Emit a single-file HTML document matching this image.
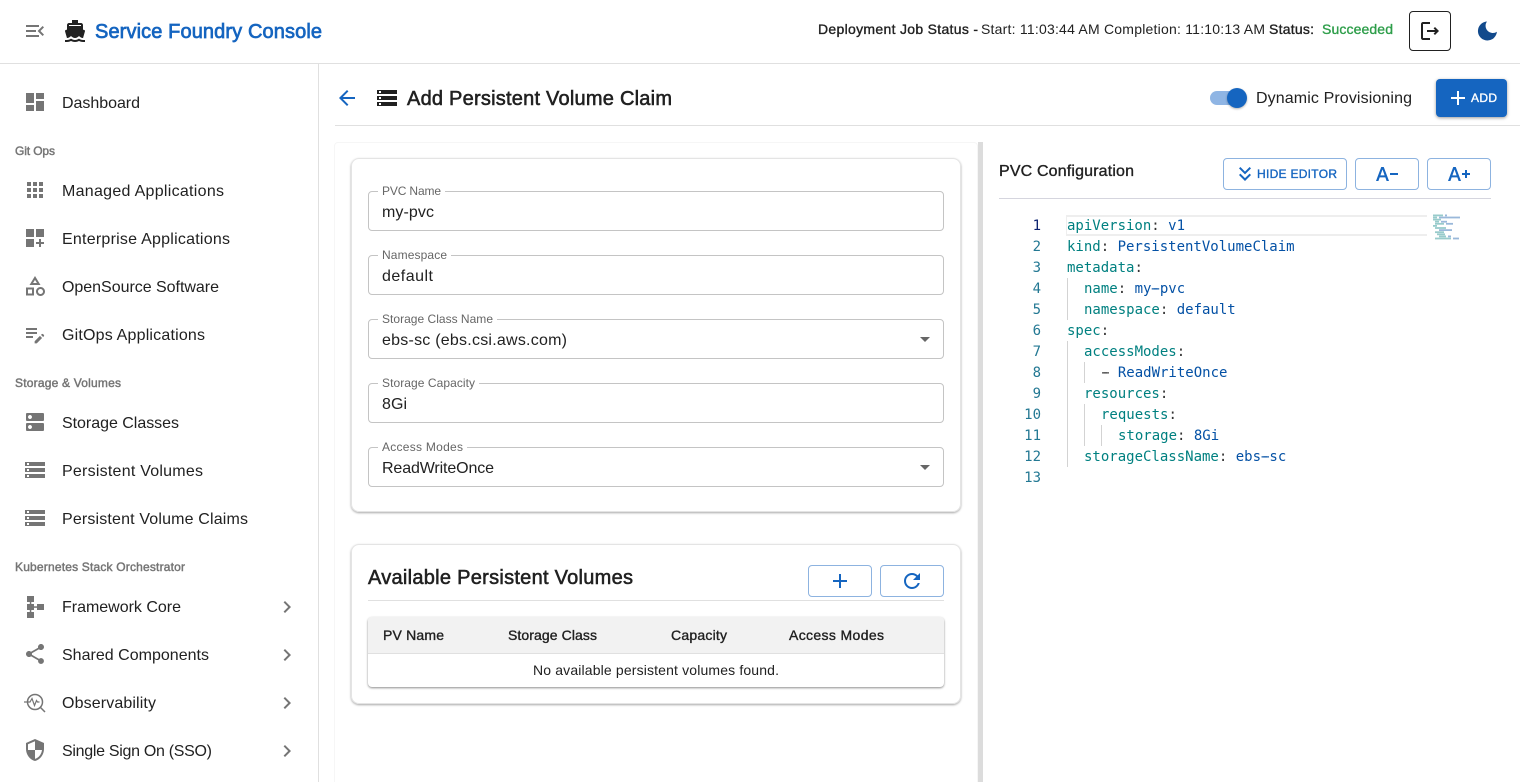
<!DOCTYPE html>
<html lang="en">
<head>
<meta charset="utf-8">
<title>Service Foundry Console</title>
<style>
html,body{margin:0;padding:0;background:#fff;width:1520px;height:782px;overflow:hidden}
.b{position:absolute;box-sizing:border-box}
svg.o{position:absolute;left:0;top:0}
text{font-family:"Liberation Sans",sans-serif;fill:#212121}
.s16{font-size:16px}.s14{font-size:14px}.s12{font-size:12px}.s20{font-size:20px}
.m{stroke-width:.35px}
.s20.m{stroke-width:.55px}
.d{stroke:#212121}
.sec{font-size:12px;fill:#757575;stroke:#757575}
.sec.m{stroke-width:.45px}
.lab{font-size:12px;fill:#666}
.blue{fill:#1565c0;stroke:#1565c0}
.ic{fill:#757575}
.cd{font-family:"DejaVu Sans Mono","Liberation Mono",monospace;font-size:14px}
.k{fill:#008080}.v{fill:#0451a5}.p{fill:#333}.n{fill:#237893}.a{fill:#0b216f}
.f{position:absolute;box-sizing:border-box;left:368px;width:576px;height:40px;border:1px solid #c4c4c4;border-radius:4px}
.btn{position:absolute;box-sizing:border-box;height:32px;border:1px solid #8db3e0;border-radius:4px}
</style>
</head>
<body>
<div class="b" style="left:0;top:63px;width:1520px;height:1px;background:#e0e0e0"></div>
<div class="b" style="left:318px;top:64px;width:1px;height:718px;background:#e0e0e0"></div>
<div class="b" style="left:335px;top:125px;width:1185px;height:1px;background:#e0e0e0"></div>
<div class="b" style="left:334px;top:142px;width:644px;height:640px;border:1px solid #f6f6f6;border-bottom:0;border-radius:4px 4px 0 0"></div>
<div class="b" style="left:978px;top:142px;width:5px;height:640px;background:#dcdcdc"></div>

<div class="b" style="left:351px;top:158px;width:610px;height:354px;border:1px solid #e4e4e4;border-radius:8px;box-shadow:0 1px 2px rgba(0,0,0,.35)"></div>
<div class="f" style="top:191px"></div>
<div class="f" style="top:255px"></div>
<div class="f" style="top:319px"></div>
<div class="f" style="top:383px"></div>
<div class="f" style="top:447px"></div>

<div class="b" style="left:351px;top:544px;width:610px;height:160px;border:1px solid #e4e4e4;border-radius:8px;box-shadow:0 1px 2px rgba(0,0,0,.35)"></div>
<div class="b" style="left:368px;top:600px;width:576px;height:1px;background:#e0e0e0"></div>
<div class="btn" style="left:808px;top:565px;width:64px"></div>
<div class="btn" style="left:880px;top:565px;width:64px"></div>
<div class="b" style="left:368px;top:617px;width:576px;height:70px;border-radius:4px;box-shadow:0 1px 2px rgba(0,0,0,.45);background:#fff;overflow:hidden">
  <div style="height:36px;background:#f2f2f2;border-bottom:1px solid #e0e0e0"></div>
</div>

<div class="b" style="left:1436px;top:79px;width:71px;height:38px;background:#1565c0;border-radius:4px;box-shadow:0 1px 3px rgba(0,0,0,.4)"></div>
<div class="b" style="left:1409px;top:11px;width:42px;height:40px;border:1px solid #212121;border-radius:4px"></div>
<div class="b" style="left:1210px;top:91px;width:34px;height:14px;background:#8fb5e4;border-radius:7px"></div>
<div class="b" style="left:1227px;top:88px;width:20px;height:20px;background:#1565c0;border-radius:50%;box-shadow:0 1px 2px rgba(0,0,0,.3)"></div>

<div class="btn" style="left:1223px;top:158px;width:124px"></div>
<div class="btn" style="left:1355px;top:158px;width:64px"></div>
<div class="btn" style="left:1427px;top:158px;width:64px"></div>
<div class="b" style="left:999px;top:198px;width:492px;height:1px;background:#d5d5de"></div>
<div class="b" style="left:1066px;top:215px;width:361px;height:21px;border:2px solid #eee;border-left-width:1px;border-right:0"></div>

<svg class="o" width="1520" height="782" viewBox="0 0 1520 782" xmlns="http://www.w3.org/2000/svg">
<!-- header -->
<g transform="translate(23,19)" fill="#757575"><path d="M3 18h13v-2H3v2zm0-5h10v-2H3v2zm0-7v2h13V6H3zm18 9.59L17.42 12 21 8.41 19.59 7l-5 5 5 5L21 15.59z"/></g>
<g transform="translate(63,19)" fill="#212121"><path d="M20 21c-1.39 0-2.78-.47-4-1.32-2.44 1.71-5.56 1.71-8 0C6.78 20.53 5.39 21 4 21H2v2h2c1.38 0 2.74-.35 4-.99 2.52 1.29 5.48 1.29 8 0 1.26.65 2.62.99 4 .99h2v-2h-2zM3.95 19H4c1.6 0 3.02-.88 4-2 .98 1.12 2.4 2 4 2s3.02-.88 4-2c.98 1.12 2.4 2 4 2h.05l1.89-6.68c.08-.26.06-.54-.06-.78s-.34-.42-.6-.5L20 10.62V6c0-1.1-.9-2-2-2h-3V1H9v3H6c-1.1 0-2 .9-2 2v4.62l-1.29.42c-.26.08-.48.26-.6.5s-.15.52-.06.78L3.95 19zM6 6h12v1H6V6z"/></g>
<text x="95" y="38" class="s20 m blue" style="stroke-width:.7px" textLength="227">Service Foundry Console</text>
<text x="818" y="34" class="s14 m d" textLength="160">Deployment Job Status -</text>
<text x="981" y="34" class="s14" textLength="284">Start: 11:03:44 AM Completion: 11:10:13 AM</text>
<text x="1269" y="34" class="s14 m d" textLength="45">Status:</text>
<text x="1322" y="34" class="s14 m" style="fill:#2e9e4a;stroke:#2e9e4a" textLength="71">Succeeded</text>
<g transform="translate(1418,19)" fill="#212121"><path d="M17 8l-1.41 1.41L17.17 11H9v2h8.17l-1.58 1.58L17 16l4-4-4-4zM5 5h7V3H5c-1.1 0-2 .9-2 2v14c0 1.1.9 2 2 2h7v-2H5V5z"/></g>
<path fill="#124a8c" d="M1487 21.500a9.500 9.500 0 1 0 9.900 10.200a7.200 7.200 0 0 1-9.900-10.200z"/>

<!-- sidebar -->
<g class="ic">
<path transform="translate(23,90)" d="M3 13h8V3H3v10zm0 8h8v-6H3v6zm10 0h8V11h-8v10zm0-18v6h8V3h-8z"/>
<path transform="translate(23,178)" d="M4 8h4V4H4v4zm6 12h4v-4h-4v4zm-6 0h4v-4H4v4zm0-6h4v-4H4v4zm6 0h4v-4h-4v4zm6-10v4h4V4h-4zm-6 4h4V4h-4v4zm6 6h4v-4h-4v4zm0 6h4v-4h-4v4z"/>
<path transform="translate(23,226)" d="M3 3h8v8H3zm10 0h8v8h-8zM3 13h8v8H3zm15 0h-2v3h-3v2h3v3h2v-3h3v-2h-3z"/>
<path transform="translate(23,274)" d="M12 2l-5.5 9h11L12 2zm0 3.84L13.93 9h-3.87L12 5.84zM17.5 13c-2.49 0-4.5 2.01-4.5 4.5s2.01 4.5 4.5 4.5 4.5-2.01 4.5-4.5-2.01-4.5-4.5-4.5zm0 7c-1.38 0-2.5-1.12-2.5-2.5s1.12-2.5 2.5-2.5 2.5 1.12 2.5 2.5-1.12 2.5-2.5 2.5zM3 21.5h8v-8H3v8zm2-6h4v4H5v-4z"/>
<path transform="translate(23,322)" d="M3 10h11v2H3v-2zm0-2h11V6H3v2zm0 8h7v-2H3v2zm15.01-3.13.71-.71c.39-.39 1.02-.39 1.41 0l.71.71c.39.39.39 1.02 0 1.41l-.71.71-2.12-2.12zm-1.06 1.06L11.64 19.24V21.36h2.12l5.3-5.3-2.11-2.13z"/>
<path transform="translate(23,410)" d="M20 13H4c-.55 0-1 .45-1 1v6c0 .55.45 1 1 1h16c.55 0 1-.45 1-1v-6c0-.55-.45-1-1-1zM7 19c-1.1 0-2-.9-2-2s.9-2 2-2 2 .9 2 2-.9 2-2 2zM20 3H4c-.55 0-1 .45-1 1v6c0 .55.45 1 1 1h16c.55 0 1-.45 1-1V4c0-.55-.45-1-1-1zM7 9c-1.1 0-2-.9-2-2s.9-2 2-2 2 .9 2 2-.9 2-2 2z"/>
<path transform="translate(23,458)" d="M2 20h20v-4H2v4zm2-3h2v2H4v-2zM2 4v4h20V4H2zm4 3H4V5h2v2zm-4 7h20v-4H2v4zm2-3h2v2H4v-2z"/>
<path transform="translate(23,506)" d="M2 20h20v-4H2v4zm2-3h2v2H4v-2zM2 4v4h20V4H2zm4 3H4V5h2v2zm-4 7h20v-4H2v4zm2-3h2v2H4v-2z"/>
<rect x="27" y="596" width="7" height="6"/><rect x="27" y="604" width="7" height="6"/><rect x="27" y="612" width="7" height="6"/><rect x="37" y="604" width="7" height="6"/><rect x="29.800" y="602" width="1.500" height="10"/><rect x="34" y="606.300" width="3" height="1.500"/>
<path transform="translate(23,642)" d="M18 16.08c-.76 0-1.44.3-1.96.77L8.91 12.7c.05-.23.09-.46.09-.7s-.04-.47-.09-.7l7.05-4.11c.54.5 1.25.81 2.04.81 1.66 0 3-1.34 3-3s-1.34-3-3-3-3 1.34-3 3c0 .24.04.47.09.7L8.04 9.81C7.5 9.31 6.79 9 6 9c-1.66 0-3 1.34-3 3s1.34 3 3 3c.79 0 1.5-.31 2.04-.81l7.12 4.16c-.05.21-.08.43-.08.65 0 1.61 1.31 2.92 2.92 2.92 1.61 0 2.92-1.31 2.92-2.92s-1.31-2.92-2.92-2.92z"/>
<path transform="translate(23,738)" d="M12 1L3 5v6c0 5.55 3.84 10.74 9 12 5.16-1.26 9-6.45 9-12V5l-9-4zm0 10.99h7c-.53 4.12-3.28 7.79-7 8.94V12H5V6.300l7-3.110v8.800z"/>
<path transform="translate(275,595)" d="M10 6L8.590 7.410 13.170 12l-4.580 4.590L10 18l6-6z"/>
<path transform="translate(275,643)" d="M10 6L8.590 7.410 13.170 12l-4.580 4.590L10 18l6-6z"/>
<path transform="translate(275,691)" d="M10 6L8.590 7.410 13.170 12l-4.580 4.590L10 18l6-6z"/>
<path transform="translate(275,739)" d="M10 6L8.590 7.410 13.170 12l-4.580 4.590L10 18l6-6z"/>
</g>
<g fill="none" stroke="#757575" stroke-width="1.500">
<circle cx="35" cy="702" r="7.500"/>
<path d="M40.500 707.500L45 712"/>
<path d="M24 702h6l2-3.500 2.500 7 2-5 1 1.500h2" stroke-width="1.200"/>
</g>
<text x="62" y="108" class="s16" textLength="78">Dashboard</text>
<text x="15" y="155" class="sec m" textLength="40">Git Ops</text>
<text x="62" y="196" class="s16" textLength="162">Managed Applications</text>
<text x="62" y="244" class="s16" textLength="168">Enterprise Applications</text>
<text x="62" y="292" class="s16" textLength="157">OpenSource Software</text>
<text x="62" y="340" class="s16" textLength="143">GitOps Applications</text>
<text x="15" y="387" class="sec m" textLength="106">Storage &amp; Volumes</text>
<text x="62" y="428" class="s16" textLength="117">Storage Classes</text>
<text x="62" y="476" class="s16" textLength="141">Persistent Volumes</text>
<text x="62" y="524" class="s16" textLength="186">Persistent Volume Claims</text>
<text x="15" y="571" class="sec m" textLength="170">Kubernetes Stack Orchestrator</text>
<text x="62" y="612" class="s16" textLength="119">Framework Core</text>
<text x="62" y="660" class="s16" textLength="147">Shared Components</text>
<text x="62" y="708" class="s16" textLength="94">Observability</text>
<text x="62" y="756" class="s16" textLength="150">Single Sign On (SSO)</text>

<!-- title row -->
<path transform="translate(335,86)" fill="#1565c0" d="M20 11H7.830l5.590-5.590L12 4l-8 8 8 8 1.410-1.410L7.830 13H20v-2z"/>
<path transform="translate(375,86)" fill="#212121" d="M2 20h20v-4H2v4zm2-3h2v2H4v-2zM2 4v4h20V4H2zm4 3H4V5h2v2zm-4 7h20v-4H2v4zm2-3h2v2H4v-2z"/>
<text x="407" y="105" class="s20 m d" textLength="265">Add Persistent Volume Claim</text>
<text x="1256" y="103" class="s16" textLength="156">Dynamic Provisioning</text>
<path transform="translate(1446,86)" fill="#fff" d="M19 13h-6v6h-2v-6H5v-2h6V5h2v6h6v2z"/>
<text x="1471" y="102" class="s12 m" style="fill:#fff;stroke:#fff" textLength="26">ADD</text>

<!-- form -->
<rect x="378" y="189" width="67" height="5" fill="#fff"/>
<rect x="378" y="253" width="73" height="5" fill="#fff"/>
<rect x="378" y="317" width="119" height="5" fill="#fff"/>
<rect x="378" y="381" width="101" height="5" fill="#fff"/>
<rect x="378" y="445" width="89" height="5" fill="#fff"/>
<text x="382" y="195" class="lab" textLength="59">PVC Name</text>
<text x="382" y="259" class="lab" textLength="65">Namespace</text>
<text x="382" y="323" class="lab" textLength="111">Storage Class Name</text>
<text x="382" y="387" class="lab" textLength="93">Storage Capacity</text>
<text x="382" y="451" class="lab" textLength="81">Access Modes</text>
<text x="382" y="217" class="s16" textLength="52">my-pvc</text>
<text x="382" y="281" class="s16" textLength="51">default</text>
<text x="382" y="345" class="s16" textLength="185">ebs-sc (ebs.csi.aws.com)</text>
<text x="382" y="409" class="s16" textLength="25">8Gi</text>
<text x="382" y="473" class="s16" textLength="112">ReadWriteOnce</text>
<path d="M920 337h10l-5 5z" fill="#666"/>
<path d="M920 465h10l-5 5z" fill="#666"/>

<!-- available PV -->
<text x="368" y="584" class="s20 m d" textLength="265">Available Persistent Volumes</text>
<path transform="translate(828,569)" fill="#1565c0" d="M19 13h-6v6h-2v-6H5v-2h6V5h2v6h6v2z"/>
<path transform="translate(900,569)" fill="#1565c0" d="M17.650 6.350C16.200 4.900 14.210 4 12 4c-4.420 0-7.990 3.580-7.990 8s3.570 8 7.990 8c3.730 0 6.840-2.550 7.730-6h-2.080c-.820 2.330-3.040 4-5.650 4-3.310 0-6-2.690-6-6s2.690-6 6-6c1.660 0 3.140.690 4.220 1.780L13 11h7V4l-2.350 2.350z"/>
<text x="383" y="640" class="s14 m d" textLength="61">PV Name</text>
<text x="508" y="640" class="s14 m d" textLength="89">Storage Class</text>
<text x="671" y="640" class="s14 m d" textLength="56">Capacity</text>
<text x="789" y="640" class="s14 m d" textLength="95">Access Modes</text>
<text x="533" y="675" class="s14" textLength="246">No available persistent volumes found.</text>

<!-- editor header -->
<text x="999" y="176" class="s16 m d" textLength="135">PVC Configuration</text>
<path transform="translate(1233,162)" fill="#1565c0" d="M18 6.410L16.590 5 12 9.580 7.410 5 6 6.410l6 6zM18 13l-1.410-1.410L12 16.170l-4.590-4.580L6 13l6 6z"/>
<text x="1257" y="178" class="s12 m blue" textLength="80">HIDE EDITOR</text>
<path transform="translate(1375,162)" fill="#1565c0" d="M.990 19h2.420l1.270-3.580h5.650L11.590 19h2.420L8.750 5h-2.500L.990 19zm4.420-5.610L7.440 7.600h.120l2.030 5.790H5.410zM23 11v2h-8v-2h8z"/>
<path transform="translate(1447,162)" fill="#1565c0" d="M.990 19h2.420l1.270-3.580h5.650L11.590 19h2.420L8.750 5h-2.500L.990 19zm4.420-5.610L7.440 7.600h.120l2.030 5.790H5.410zM23 11v2h-3v3h-2v-3h-3v-2h3V8h2v3h3z"/>

<!-- indent guides -->
<g fill="#d3d3d3">
<rect x="1067" y="278" width="1" height="42"/>
<rect x="1067" y="341" width="1" height="126"/>
<rect x="1084" y="362" width="1" height="21"/>
<rect x="1084" y="404" width="1" height="42"/>
<rect x="1101" y="425" width="1" height="21"/>
</g>

<!-- code -->
<g class="cd" style="text-anchor:end">
<text x="1041" y="230" class="cd a">1</text>
<text x="1041" y="251" class="cd n">2</text>
<text x="1041" y="272" class="cd n">3</text>
<text x="1041" y="293" class="cd n">4</text>
<text x="1041" y="314" class="cd n">5</text>
<text x="1041" y="335" class="cd n">6</text>
<text x="1041" y="356" class="cd n">7</text>
<text x="1041" y="377" class="cd n">8</text>
<text x="1041" y="398" class="cd n">9</text>
<text x="1041" y="419" class="cd n">10</text>
<text x="1041" y="440" class="cd n">11</text>
<text x="1041" y="461" class="cd n">12</text>
<text x="1041" y="482" class="cd n">13</text>
</g>
<text x="1067" y="230" class="cd"><tspan class="k">apiVersion</tspan><tspan class="p">: </tspan><tspan class="v">v1</tspan></text>
<text x="1067" y="251" class="cd"><tspan class="k">kind</tspan><tspan class="p">: </tspan><tspan class="v">PersistentVolumeClaim</tspan></text>
<text x="1067" y="272" class="cd"><tspan class="k">metadata</tspan><tspan class="p">:</tspan></text>
<text x="1084" y="293" class="cd"><tspan class="k">name</tspan><tspan class="p">: </tspan><tspan class="v">my-pvc</tspan></text>
<text x="1084" y="314" class="cd"><tspan class="k">namespace</tspan><tspan class="p">: </tspan><tspan class="v">default</tspan></text>
<text x="1067" y="335" class="cd"><tspan class="k">spec</tspan><tspan class="p">:</tspan></text>
<text x="1084" y="356" class="cd"><tspan class="k">accessModes</tspan><tspan class="p">:</tspan></text>
<text x="1101" y="377" class="cd"><tspan class="p">- </tspan><tspan class="v">ReadWriteOnce</tspan></text>
<text x="1084" y="398" class="cd"><tspan class="k">resources</tspan><tspan class="p">:</tspan></text>
<text x="1101" y="419" class="cd"><tspan class="k">requests</tspan><tspan class="p">:</tspan></text>
<text x="1118" y="440" class="cd"><tspan class="k">storage</tspan><tspan class="p">: </tspan><tspan class="v">8Gi</tspan></text>
<text x="1084" y="461" class="cd"><tspan class="k">storageClassName</tspan><tspan class="p">: </tspan><tspan class="v">ebs-sc</tspan></text>
<!-- the hyphen draws wider in the reference editor font -->
<rect x="1102" y="372.300" width="7" height="1.150" fill="#333"/>
<rect x="1151.700" y="288.300" width="7.500" height="1.150" fill="#0451a5"/>
<rect x="1261.500" y="456.300" width="7.500" height="1.150" fill="#0451a5"/>

<!-- minimap -->
<g opacity=".4">
<g fill="#008080">
<rect x="1433" y="214.500" width="10" height="1.800"/><rect x="1433" y="216.600" width="4" height="1.800"/><rect x="1433" y="218.700" width="8" height="1.800"/><rect x="1435" y="220.800" width="4" height="1.800"/><rect x="1435" y="222.900" width="9" height="1.800"/><rect x="1433" y="225" width="4" height="1.800"/><rect x="1435" y="227.100" width="11" height="1.800"/><rect x="1435" y="231.300" width="9" height="1.800"/><rect x="1437" y="233.400" width="8" height="1.800"/><rect x="1439" y="235.500" width="7" height="1.800"/><rect x="1435" y="237.600" width="16" height="1.800"/>
</g>
<g fill="#0451a5">
<rect x="1445" y="214.500" width="2" height="1.800"/><rect x="1439" y="216.600" width="21" height="1.800"/><rect x="1441" y="220.800" width="6" height="1.800"/><rect x="1446" y="222.900" width="7" height="1.800"/><rect x="1439" y="229.200" width="13" height="1.800"/><rect x="1448" y="235.500" width="3" height="1.800"/><rect x="1453" y="237.600" width="6" height="1.800"/>
</g>
</g>
</svg>
</body>
</html>
